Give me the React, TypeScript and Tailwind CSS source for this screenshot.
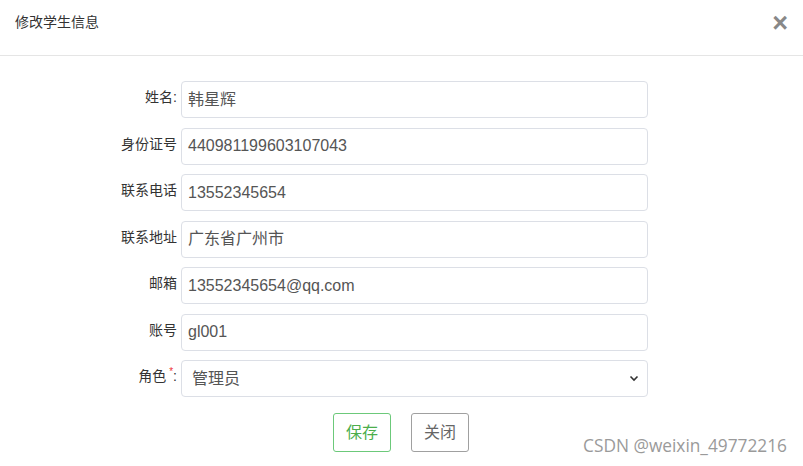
import React from "react";

const rows: { label: string; value: string }[] = [
  { label: "姓名:", value: "韩星辉" },
  { label: "身份证号", value: "440981199603107043" },
  { label: "联系电话", value: "13552345654" },
  { label: "联系地址", value: "广东省广州市" },
  { label: "邮箱", value: "13552345654@qq.com" },
  { label: "账号", value: "gl001" },
];

export default function App() {
  return (
    <div
      className="relative w-[803px] h-[466px] bg-white overflow-hidden"
      style={{ fontFamily: '"Liberation Sans", "Noto Sans CJK SC", sans-serif' }}
    >
      <div className="h-[56px] border-b border-[#e5e5e5] flex items-center justify-between pl-[15px] pr-[15px]">
        <span className="text-[14px] text-[#333] leading-none -mt-[11px]">修改学生信息</span>
        <span className="text-[27px] font-bold text-[#888] leading-none -mt-[8px]">×</span>
      </div>
      <div className="pt-[25px] flex flex-col gap-[9.5px]">
        {rows.map((r) => (
          <div key={r.label} className="flex items-center">
            <div className="w-[177px] text-right text-[14px] text-[#333] -mt-[4px]">{r.label}</div>
            <div className="ml-[4px] w-[467px] h-[37px] border border-[#dcdfe6] rounded-[4px] flex items-center pl-[6px] text-[16px] text-[#555]">
              {r.value}
            </div>
          </div>
        ))}
        <div className="flex items-center">
          <div className="w-[177px] text-right text-[14px] text-[#333] -mt-[4px]">
            角色<span className="text-[#e33] text-[10px] align-top relative -top-[2px] ml-[3px]">*</span>:
          </div>
          <div className="ml-[4px] w-[467px] h-[37px] border border-[#dcdfe6] rounded-[4px] flex items-center justify-between pl-[10px] pr-[8px] text-[16px] text-[#555]">
            <span>管理员</span>
            <svg width="10" height="7" viewBox="0 0 10 7" fill="none">
              <path d="M1.5 1.5 L5 5 L8.5 1.5" stroke="#333" strokeWidth="1.6" />
            </svg>
          </div>
        </div>
      </div>
      <div className="flex justify-center gap-[20px] mt-[16px] -ml-[1px]">
        <button className="w-[58px] h-[39px] border border-[#6cc97a] rounded-[3px] text-[16px] text-[#4cae4c] bg-white">
          保存
        </button>
        <button className="w-[58px] h-[39px] border border-[#a0a0a0] rounded-[3px] text-[16px] text-[#666] bg-white">
          关闭
        </button>
      </div>
      <div
        className="absolute right-[16px] top-[435px] text-[17.3px] text-[#9a9a9a] leading-[22px]"
        style={{ fontFamily: '"Open Sans", "Noto Sans", sans-serif' }}
      >
        CSDN @weixin_49772216
      </div>
    </div>
  );
}
